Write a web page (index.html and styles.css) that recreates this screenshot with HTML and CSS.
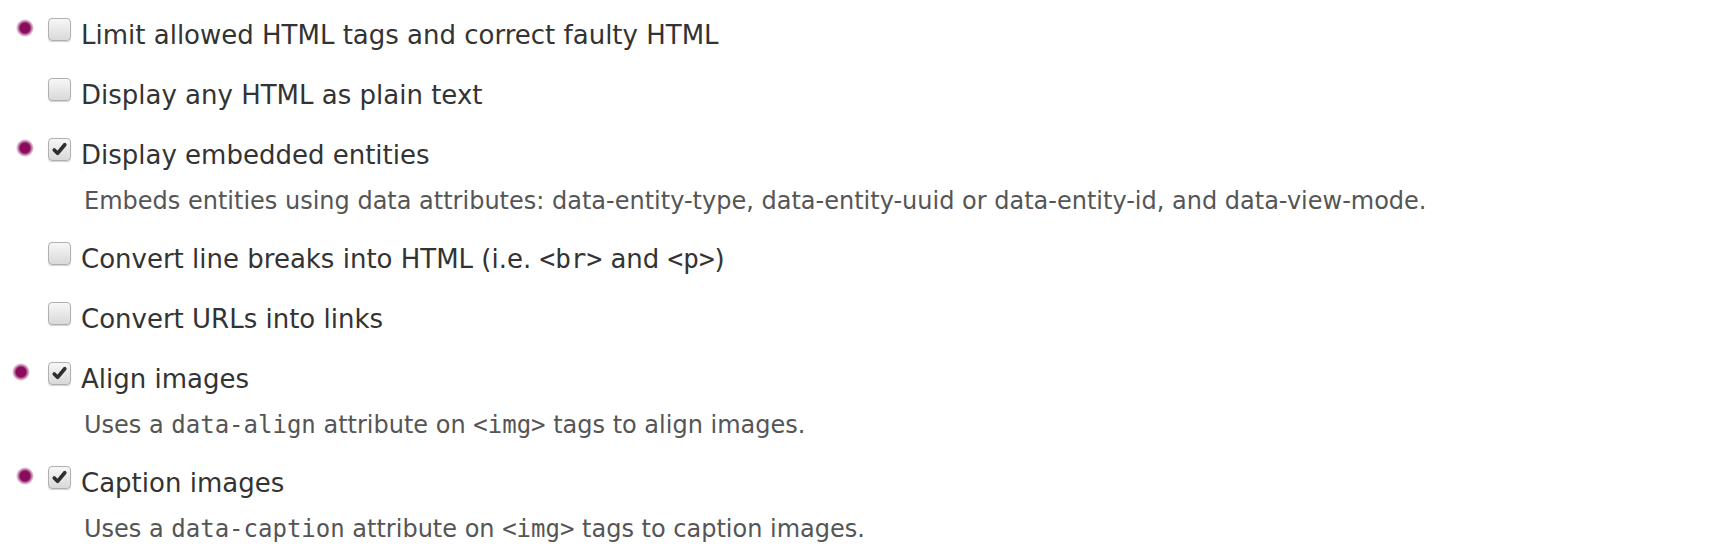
FILE: index.html
```html
<!DOCTYPE html>
<html lang="en">
<head>
    <meta charset="UTF-8">
    <title>Text format - Filters</title>
    <link rel="stylesheet" href="styles.css">
</head>
<body>

<div class="filter-list">
    <div class="form-item changed">
        <div class="form-row">
            <span class="form-checkbox"></span>
            <label>Limit allowed HTML tags and correct faulty HTML</label>
        </div>
    </div>

    <div class="form-item">
        <div class="form-row">
            <span class="form-checkbox"></span>
            <label>Display any HTML as plain text</label>
        </div>
    </div>

    <div class="form-item changed">
        <div class="form-row">
            <span class="form-checkbox checked">
                <svg viewBox="0 0 22 22"><path d="M5.5 11.5 L9 15 L16.5 6"/></svg>
            </span>
            <label>Display embedded entities</label>
        </div>
        <div class="description">Embeds entities using data attributes: data-entity-type, data-entity-uuid or data-entity-id, and data-view-mode.</div>
    </div>

    <div class="form-item">
        <div class="form-row">
            <span class="form-checkbox"></span>
            <label>Convert line breaks into HTML (i.e. <code>&lt;br&gt;</code> and <code>&lt;p&gt;</code>)</label>
        </div>
    </div>

    <div class="form-item">
        <div class="form-row">
            <span class="form-checkbox"></span>
            <label>Convert URLs into links</label>
        </div>
    </div>

    <div class="form-item changed shifted">
        <div class="form-row">
            <span class="form-checkbox checked">
                <svg viewBox="0 0 22 22"><path d="M5.5 11.5 L9 15 L16.5 6"/></svg>
            </span>
            <label>Align images</label>
        </div>
        <div class="description">Uses a <code>data-align</code> attribute on <code>&lt;img&gt;</code> tags to align images.</div>
    </div>

    <div class="form-item changed">
        <div class="form-row">
            <span class="form-checkbox checked">
                <svg viewBox="0 0 22 22"><path d="M5.5 11.5 L9 15 L16.5 6"/></svg>
            </span>
            <label>Caption images</label>
        </div>
        <div class="description">Uses a <code>data-caption</code> attribute on <code>&lt;img&gt;</code> tags to caption images.</div>
    </div>
</div>

</body>
</html>
```

FILE: styles.css
```css
body {
    font-family: 'DejaVu Sans', sans-serif;
    margin: 0;
    padding: 0;
    background-color: #fff;
    color: #333;
}

.filter-list {
    padding: 17px 0 0 48px;
}

.form-item {
    position: relative;
    margin-bottom: 24px;
}

/* Markierung fuer geaenderte Filter */
.form-item.changed::before {
    content: "";
    position: absolute;
    left: -32px;
    top: 2px;
    width: 18px;
    height: 18px;
    border-radius: 50%;
    background: radial-gradient(circle, #8a0b5b 0%, #8a0b5b 38%, rgba(138, 11, 91, 0.45) 55%, rgba(138, 11, 91, 0) 72%);
}

.form-item.shifted::before {
    left: -36px;
}

.form-row {
    display: flex;
    align-items: flex-start;
    gap: 10px;
}

.form-row label {
    font-size: 26px;
    line-height: 36px;
    color: #333;
}

.form-checkbox {
    flex: 0 0 auto;
    width: 21px;
    height: 21px;
    margin-top: 1px;
    border: 1px solid #b0b0b0;
    border-radius: 4px;
    background: linear-gradient(#f7f7f7, #d9d9d9);
    box-shadow: 0 1px 1px rgba(0, 0, 0, 0.18);
}

.form-checkbox svg {
    display: block;
    width: 21px;
    height: 21px;
}

.form-checkbox svg path {
    fill: none;
    stroke: #2f2f2f;
    stroke-width: 3.8;
    stroke-linecap: round;
    stroke-linejoin: round;
}

.description {
    margin: 12px 0 0 36px;
    font-size: 24px;
    line-height: 32px;
    color: #555;
}

code {
    font-family: 'DejaVu Sans Mono', monospace;
    font-size: 1em;
}
```
